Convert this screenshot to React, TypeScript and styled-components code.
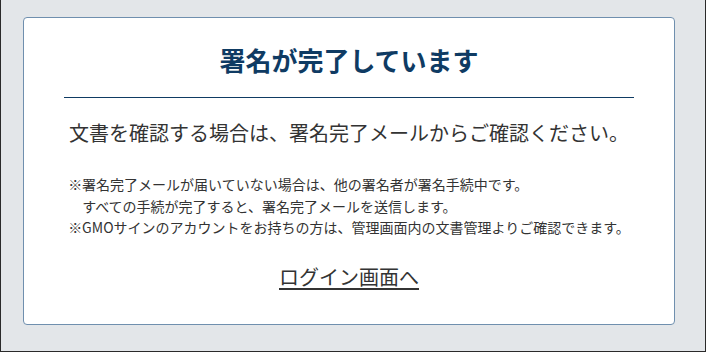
import React from "react";
import styled, { createGlobalStyle } from "styled-components";

const GlobalStyle = createGlobalStyle`
  html, body {
    margin: 0;
    padding: 0;
    background: #e3e6e9;
  }
  body {
    font-family: "Noto Sans CJK JP", "Noto Sans", sans-serif;
    color: #333333;
  }
`;

const Page = styled.div`
  box-sizing: border-box;
  width: 706px;
  height: 352px;
  padding: 17px 32px 0 23px;
  background: #e3e6e9;
  border-left: 1px solid #2a2a2a;
  border-right: 1px solid #2a2a2a;
  border-bottom: 1px solid #2a2a2a;
  padding-left: 22px;
`;

const Card = styled.div`
  box-sizing: border-box;
  width: 652px;
  height: 308px;
  background: #ffffff;
  border: 1px solid #6f8fae;
  border-radius: 4px;
  padding: 24px 40px 0;
  display: flex;
  flex-direction: column;
  align-items: center;
`;

const Title = styled.h1`
  align-self: stretch;
  margin: 0;
  padding-bottom: 19px;
  border-bottom: 1px solid #0f3b63;
  font-size: 26px;
  line-height: 36px;
  font-weight: 700;
  color: #0f3b63;
  text-align: center;
`;

const Lead = styled.p`
  margin: 20px 0 0;
  font-size: 20px;
  line-height: 30px;
  color: #333333;
  text-align: center;
`;

const Notes = styled.div`
  margin-top: 26px;
  font-size: 14px;
  line-height: 21.5px;
  color: #333333;
  text-align: left;
`;

const NoteLine = styled.div<{ indent?: boolean }>`
  padding-left: ${({ indent }) => (indent ? "14px" : "0")};
  white-space: nowrap;
`;

const LoginLink = styled.a`
  margin-top: 23px;
  font-size: 20px;
  line-height: 30px;
  color: #333333;
  text-decoration: underline;
  text-underline-offset: 3px;
  cursor: pointer;
`;

export default function App() {
  return (
    <>
      <GlobalStyle />
      <Page>
        <Card>
          <Title>署名が完了しています</Title>
          <Lead>文書を確認する場合は、署名完了メールからご確認ください。</Lead>
          <Notes>
            <NoteLine>※署名完了メールが届いていない場合は、他の署名者が署名手続中です。</NoteLine>
            <NoteLine indent>すべての手続が完了すると、署名完了メールを送信します。</NoteLine>
            <NoteLine>※GMOサインのアカウントをお持ちの方は、管理画面内の文書管理よりご確認できます。</NoteLine>
          </Notes>
          <LoginLink href="#">ログイン画面へ</LoginLink>
        </Card>
      </Page>
    </>
  );
}
